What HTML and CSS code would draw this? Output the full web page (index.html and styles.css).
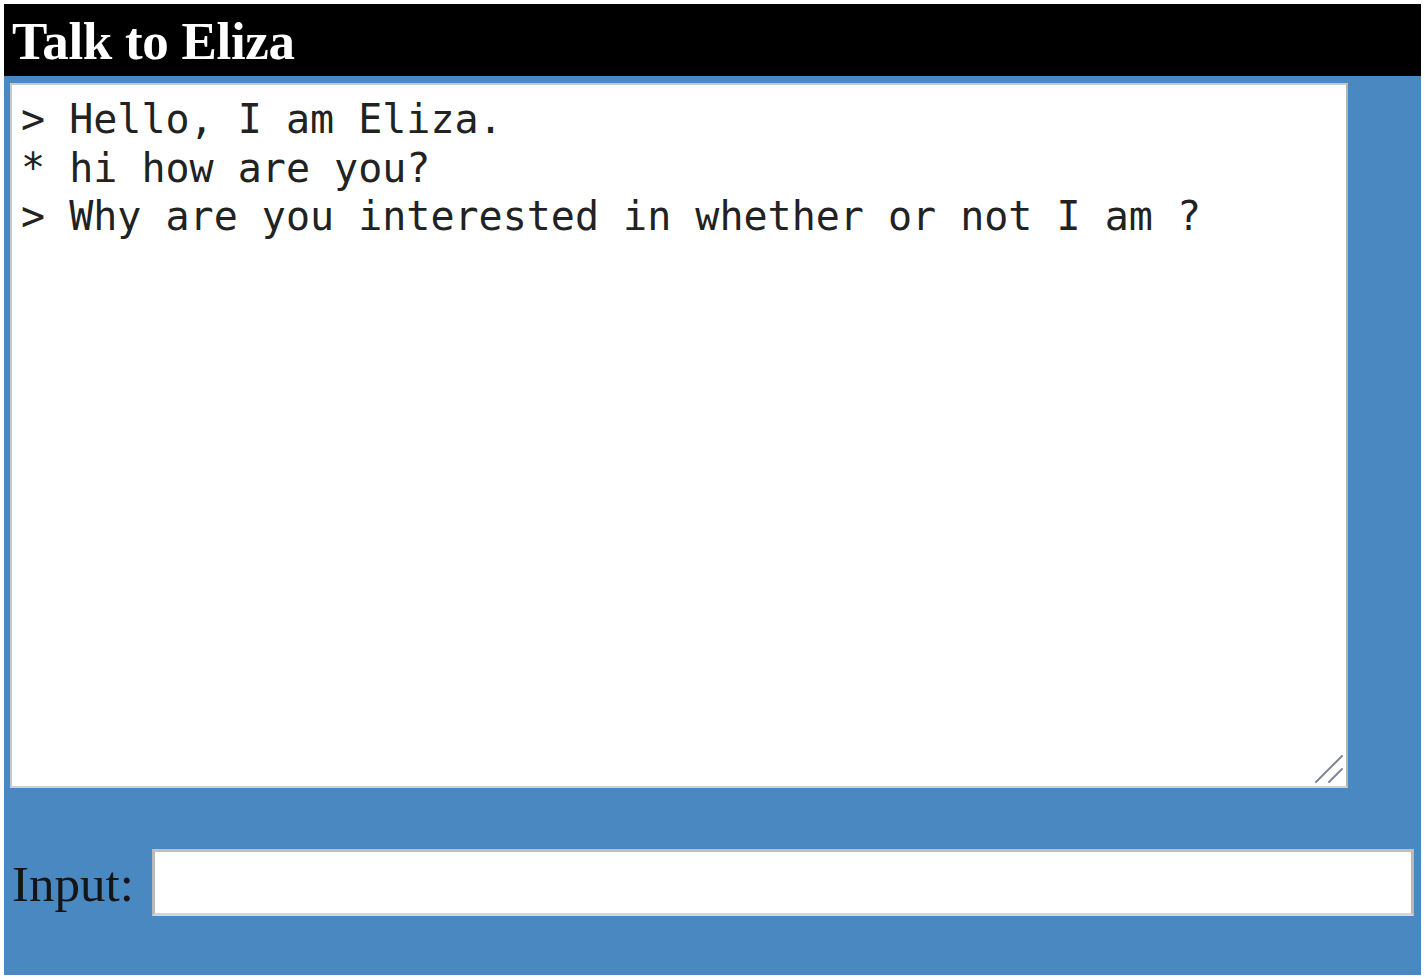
FILE: index.html
```html
<!DOCTYPE html>
<html>
<head>
<meta charset="utf-8">
<title>Talk to Eliza</title>
<link rel="stylesheet" href="styles.css">
</head>
<body>
<div class="app">
  <div class="header">Talk to Eliza</div>
  <div class="panel">
    <div class="log-wrap">
      <textarea class="log" readonly spellcheck="false">&gt; Hello, I am Eliza.
* hi how are you?
&gt; Why are you interested in whether or not I am ?</textarea>
      <svg class="grip" width="30" height="30" viewBox="0 0 30 30" aria-hidden="true">
        <line x1="2" y1="28" x2="28" y2="2" stroke="#7d8894" stroke-width="2" stroke-linecap="round"/>
        <line x1="15" y1="28" x2="28" y2="15" stroke="#7d8894" stroke-width="2" stroke-linecap="round"/>
      </svg>
    </div>
    <div class="input-row">
      <label class="label" for="in">Input:</label>
      <input class="field" id="in" type="text">
    </div>
  </div>
</div>
</body>
</html>
```
FILE: styles.css
```css
html, body {
  margin: 0;
  padding: 0;
  background: #ffffff;
}
.app {
  margin: 4px 0 0 4px;
  width: 1417px;
  height: 971px;
  display: flex;
  flex-direction: column;
}
.header {
  height: 72px;
  background: #000000;
  color: #ffffff;
  font-family: "Liberation Serif", "Times New Roman", serif;
  font-weight: bold;
  font-size: 53px;
  line-height: 74px;
  padding-left: 8px;
  box-sizing: border-box;
  letter-spacing: -0.3px;
}
.panel {
  flex: 1;
  background: #4a88c2;
  padding: 7px 6px 0 6px;
  display: flex;
  flex-direction: column;
}
.log-wrap {
  position: relative;
  width: 1338px;
  height: 705px;
}
.log {
  display: block;
  width: 1338px;
  height: 705px;
  box-sizing: border-box;
  margin: 0;
  border: 2px solid #c8c8c8;
  border-right-color: #b4b4b4;
  border-bottom-color: #d0d0d0;
  background: #ffffff;
  padding: 10px 10px 10px 9px;
  font-family: "DejaVu Sans Mono", "Liberation Mono", monospace;
  font-size: 40px;
  line-height: 48.5px;
  color: #222222;
  resize: none;
  outline: none;
  overflow: hidden;
}
.grip {
  position: absolute;
  right: 4px;
  bottom: 4px;
}
.input-row {
  margin-top: 61px;
  display: flex;
  align-items: center;
}
.label {
  font-family: "Liberation Serif", "Times New Roman", serif;
  font-size: 51px;
  color: #151515;
  width: 142px;
  padding-left: 2px;
  box-sizing: border-box;
  margin-top: 2px;
}
.field {
  width: 1262px;
  height: 67px;
  box-sizing: border-box;
  margin: 0;
  border: 3px solid #b8b8b8;
  border-top-color: #c0c0c0;
  border-bottom-color: #d6d6d6;
  background: #ffffff;
  outline: none;
  font-size: 40px;
}
```
